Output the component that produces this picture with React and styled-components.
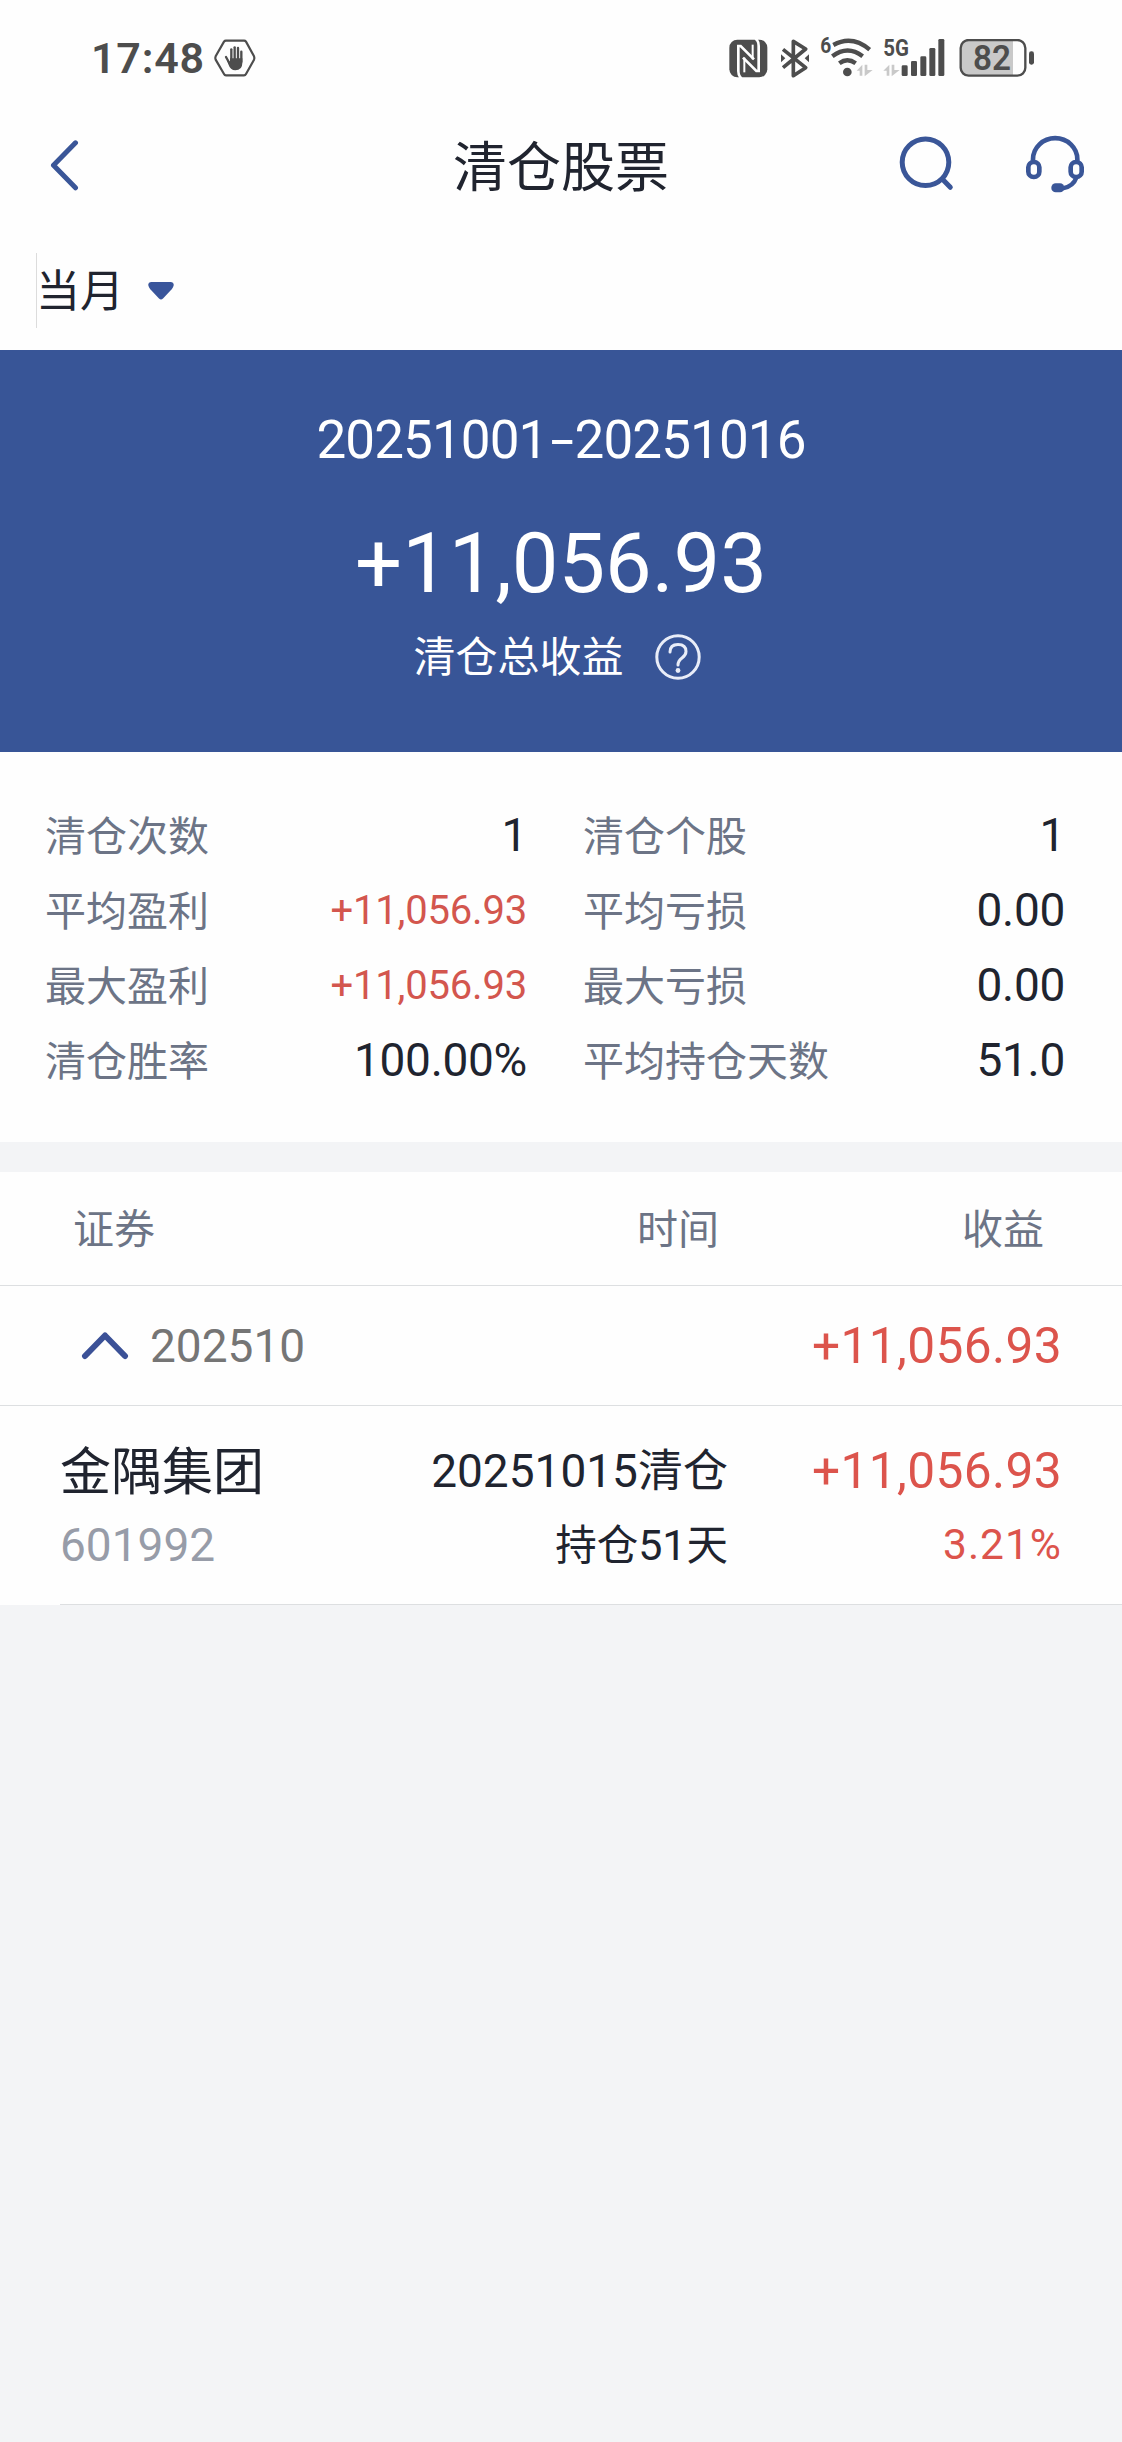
import React from "react";
import styled, { createGlobalStyle } from "styled-components";

const stats = [
  { label: "清仓次数", value: "1" },
  { label: "清仓个股", value: "1" },
  { label: "平均盈利", value: "+11,056.93", profit: true },
  { label: "平均亏损", value: "0.00" },
  { label: "最大盈利", value: "+11,056.93", profit: true },
  { label: "最大亏损", value: "0.00" },
  { label: "清仓胜率", value: "100.00%" },
  { label: "平均持仓天数", value: "51.0" },
];

const HandIcon = () => (
  <svg width="42" height="38" viewBox="431 58 126 114" fill="none">
    <path
      d="M467 63 H521 Q525 63 527 66 L551 110 Q553 115 551 120 L527 163 Q525 167 521 167 H467 Q463 167 461 163 L436 120 Q434 115 436 110 L461 66 Q463 63 467 63 Z"
      stroke="#4d4d4d"
      strokeWidth="6.5"
    />
    <g stroke="#4d4d4d" strokeWidth="7" strokeLinecap="round">
      <path d="M483 122 V89" />
      <path d="M493 122 V83" />
      <path d="M503 122 V85" />
      <path d="M513 126 V96" />
      <path d="M477 130 L467 112" />
    </g>
    <path
      d="M479 116 H516 V130 Q516 152 495 152 Q480 152 474 134 L470 122 L479 126 Z"
      fill="#4d4d4d"
    />
  </svg>
);

const NfcIcon = () => (
  <svg width="39" height="39" viewBox="57 56 117 117" fill="none">
    <rect x="58" y="58" width="114" height="113" rx="24" fill="#4d4d4d" />
    <path
      d="M95 174 Q85 168 85 152 V77 H92 L132 117"
      stroke="#fff"
      strokeWidth="8"
    />
    <path
      d="M136 55 Q146 61 146 77 V152 H139 L99 112"
      stroke="#fff"
      strokeWidth="8"
    />
    <path d="M103 112 V156" stroke="#fff" strokeWidth="6" />
    <path d="M128 117 V73" stroke="#fff" strokeWidth="6" />
  </svg>
);

const BluetoothIcon = () => (
  <svg width="30" height="39" viewBox="210 57 90 117" fill="none">
    <path
      d="M219 88 L287 143 L250 167 V64 L287 87 L219 143"
      stroke="#4d4d4d"
      strokeWidth="11"
      strokeLinejoin="round"
    />
    <path d="M213 103 L226 115 L213 127 Z" fill="#4d4d4d" />
    <path d="M297 103 L284 115 L297 127 Z" fill="#4d4d4d" />
  </svg>
);

const WifiIcon = () => (
  <svg width="53" height="48" viewBox="331 30 159 144" fill="none">
    <text
      x="332"
      y="99"
      fontFamily="Roboto, sans-serif"
      fontSize="64"
      fontWeight="700"
      fill="#4d4d4d"
      textLength="33"
      lengthAdjust="spacingAndGlyphs"
    >
      6
    </text>
    <g stroke="#4d4d4d" strokeWidth="13">
      <path d="M371 75 Q427 44 480 89" />
      <path d="M368 109 Q414 74 459 109" />
      <path d="M389 130 Q413 112 438 130" />
    </g>
    <circle cx="413" cy="156" r="13" fill="#4d4d4d" />
    <path d="M441 152 L458 134 V167 H450 V152 Z" fill="#c9c9c9" />
    <path d="M465 134 H473 V150 H489 L465 169 Z" fill="#c9c9c9" />
  </svg>
);

const SignalIcon = () => (
  <svg width="62" height="48" viewBox="518 30 186 144" fill="none">
    <text
      x="519"
      y="109"
      fontFamily="Roboto, sans-serif"
      fontSize="70"
      fontWeight="700"
      fill="#4d4d4d"
      textLength="77"
      lengthAdjust="spacingAndGlyphs"
    >
      5G
    </text>
    <path d="M519 152 L537 134 V167 H529 V152 Z" fill="#c9c9c9" />
    <path d="M544 134 H552 V150 H568 L544 169 Z" fill="#c9c9c9" />
    <g fill="#4d4d4d">
      <rect x="574" y="136" width="18" height="32" rx="4" />
      <rect x="602" y="123" width="18" height="45" rx="4" />
      <rect x="630" y="109" width="18" height="59" rx="4" />
      <rect x="657" y="84" width="18" height="84" rx="4" />
      <rect x="684" y="57" width="18" height="111" rx="4" />
    </g>
  </svg>
);

const BatteryIcon = () => (
  <svg width="76" height="39" viewBox="747 56 228 117" fill="none">
    <path d="M773 60 H909 V165 H773 Q753 165 753 143 V82 Q753 60 773 60 Z" fill="#c9c9c9" />
    <rect x="752" y="59" width="194" height="107" rx="24" stroke="#4d4d4d" strokeWidth="7" />
    <rect x="957" y="93" width="15" height="40" rx="7" fill="#4d4d4d" />
    <text
      x="846"
      y="149"
      textAnchor="middle"
      fontFamily="Roboto, sans-serif"
      fontSize="103"
      fontWeight="600"
      fill="#4d4d4d"
      textLength="114"
      lengthAdjust="spacingAndGlyphs"
    >
      82
    </text>
  </svg>
);

const BackIcon = () => (
  <svg width="30" height="54" viewBox="0 0.7 30 54" fill="none">
    <path
      d="M26.5 4.5 L4.5 27 L26.5 49.5"
      stroke="#3a5698"
      strokeWidth="5"
      strokeLinecap="round"
      strokeLinejoin="round"
    />
  </svg>
);

const SearchIcon = () => (
  <svg width="56" height="62" viewBox="0 -0.3 56 62" fill="none">
    <circle cx="27.5" cy="27" r="23.3" stroke="#3a5698" strokeWidth="5" />
    <path d="M44.5 44 L52.3 52" stroke="#3a5698" strokeWidth="5" strokeLinecap="round" />
  </svg>
);

const HeadsetIcon = () => (
  <svg width="60" height="62" viewBox="495 75 180 186" fill="none" stroke="#3a5698">
    <path d="M519 152 V148 A66 63 0 0 1 652 148 V152" strokeWidth="14" />
    <rect x="505" y="156" width="33" height="45" rx="16" strokeWidth="14" />
    <rect x="632" y="156" width="33" height="45" rx="16" strokeWidth="14" />
    <path d="M649 203 Q640 229 608 235" strokeWidth="13" />
    <rect x="574" y="220" width="39" height="27" rx="13" fill="#3a5698" stroke="none" />
  </svg>
);

const HelpIcon = () => (
  <svg width="46" height="46" viewBox="0 0 46 46" fill="none" stroke="#e9edf8">
    <circle cx="23" cy="23" r="21.2" strokeWidth="3" />
    <path
      d="M15 18 Q15 10.5 23 10.5 Q31 10.5 31 17.5 Q31 21 27 24 Q23 27 23 31"
      strokeWidth="3"
      strokeLinecap="round"
    />
    <circle cx="23" cy="36.5" r="2.4" fill="#e9edf8" stroke="none" />
  </svg>
);

const ChevronUpIcon = () => (
  <svg width="48" height="30" viewBox="0 0.5 48 30" fill="none">
    <path
      d="M4 25.5 L24 5 L44 25.5"
      stroke="#3b5197"
      strokeWidth="6"
      strokeLinecap="round"
      strokeLinejoin="round"
    />
  </svg>
);

const App = () => {
  return (
    <Page>
      <GlobalStyle />
      <StatusBar>
        <Clock>17:48</Clock>
        <HandIcon />
        <StatusIcons>
          <NfcIcon />
          <BluetoothIcon />
          <WifiIcon />
          <SignalIcon />
          <BatteryIcon />
        </StatusIcons>
      </StatusBar>

      <NavBar>
        <BackIcon />
        <h1>清仓股票</h1>
        <NavActions>
          <SearchIcon />
          <HeadsetIcon />
        </NavActions>
      </NavBar>

      <FilterBar>
        <MonthPicker>
          <span>当月</span>
          <svg width="26" height="18" viewBox="0 0 26 18">
            <path
              d="M3 0 H23 Q26.5 0.5 25.5 4 Q25 5.5 23.5 7.5 L15 16.5 Q13 18.5 11 16.5 L2.5 7.5 Q1 5.5 0.5 4 Q-0.5 0.5 3 0 Z"
              fill="#39559b"
            />
          </svg>
        </MonthPicker>
      </FilterBar>

      <Summary>
        <DateRange>
          20251001<i>-</i>20251016
        </DateRange>
        <Total>+11,056.93</Total>
        <TotalLabel>
          <span>清仓总收益</span>
          <HelpIcon />
        </TotalLabel>
      </Summary>

      <StatGrid>
        {stats.map((stat) => (
          <Stat key={stat.label}>
            <StatLabel>{stat.label}</StatLabel>
            <StatValue $profit={stat.profit}>{stat.value}</StatValue>
          </Stat>
        ))}
      </StatGrid>

      <TableHead>
        <span>证券</span>
        <span>时间</span>
        <span>收益</span>
      </TableHead>

      <MonthRow>
        <ChevronUpIcon />
        <span>202510</span>
        <Profit>+11,056.93</Profit>
      </MonthRow>

      <StockRow>
        <Cell>
          <StockName>金隅集团</StockName>
          <StockCode>601992</StockCode>
        </Cell>
        <Cell $right>
          <SoldDate>
            <b>20251015</b>清仓
          </SoldDate>
          <HoldDays>
            持仓<b>51</b>天
          </HoldDays>
        </Cell>
        <Cell $right>
          <Profit>+11,056.93</Profit>
          <Profit $small>3.21%</Profit>
        </Cell>
      </StockRow>
    </Page>
  );
};

const GlobalStyle = createGlobalStyle`
  * {
    box-sizing: border-box;
  }
  body {
    margin: 0;
    background: #f3f4f6;
  }
  svg {
    display: block;
    flex-shrink: 0;
  }
`;

const Page = styled.div`
  min-height: 2442px;
  background: #f3f4f6;
  color: #20242f;
  font-family: Roboto, "Noto Sans CJK SC", sans-serif;
  line-height: 1.2;
`;

const StatusBar = styled.div`
  display: flex;
  align-items: center;
  height: 116px;
  padding: 0 87px 0 91px;
  background: #fefefe;
`;

const Clock = styled.span`
  width: 123px;
  padding-top: 1px;
  color: #4d4d4d;
  font-size: 43px;
  font-weight: 600;
  letter-spacing: 0.8px;
`;

const StatusIcons = styled.div`
  display: flex;
  align-items: flex-end;
  gap: 10px;
  height: 39px;
  margin-left: auto;
  svg:first-child {
    margin-right: 2px;
  }
  svg:last-child {
    margin-left: 4px;
  }
`;

const NavBar = styled.div`
  display: grid;
  grid-template-columns: 1fr auto 1fr;
  align-items: center;
  height: 100px;
  padding: 0 37px 0 49px;
  background: #fefefe;
  h1 {
    margin: 0 12px 0 0;
    padding-top: 6px;
    font-size: 54px;
    font-weight: 400;
    line-height: 94px;
  }
`;

const NavActions = styled.div`
  display: flex;
  justify-content: flex-end;
  align-items: center;
  gap: 71px;
  margin-left: -12px;
`;

const FilterBar = styled.div`
  height: 134px;
  padding: 37px 36px 0;
  background: #fefefe;
`;

const MonthPicker = styled.div`
  display: flex;
  align-items: center;
  width: 160px;
  height: 75px;
  border-left: 1px solid #dcdcdc;
  font-size: 44px;
  span {
    width: 88px;
    margin-right: 23px;
    padding-top: 4px;
    text-indent: -1px;
  }
`;

const Summary = styled.div`
  display: flex;
  flex-direction: column;
  align-items: center;
  height: 402px;
  padding-top: 55px;
  background: #385597;
  color: #fff;
`;

const DateRange = styled.div`
  font-size: 53px;
  line-height: 70px;
  letter-spacing: -0.9px;
  i {
    display: inline-block;
    width: 27px;
    font-style: normal;
    text-align: center;
    transform: scaleX(1.6);
  }
`;

const Total = styled.div`
  margin-top: 39px;
  font-size: 83px;
  line-height: 100px;
`;

const TotalLabel = styled.div`
  display: flex;
  align-items: center;
  gap: 31px;
  height: 50px;
  margin-top: 18px;
  padding-right: 8px;
  font-size: 42px;
  span {
    padding-top: 3px;
  }
`;

const StatGrid = styled.div`
  display: grid;
  grid-template-columns: 482px 482px;
  grid-auto-rows: 75px;
  column-gap: 56px;
  height: 390px;
  padding: 46px 45px 0;
  background: #fefefe;
`;

const Stat = styled.div`
  display: flex;
  align-items: center;
  justify-content: space-between;
`;

const StatLabel = styled.span`
  padding-top: 4px;
  color: #6c7486;
  font-size: 41px;
`;

const StatValue = styled.span`
  padding-top: 1px;
  color: ${(props) => (props.$profit ? "#d3564e" : "#20242f")};
  font-size: ${(props) => (props.$profit ? "40px" : "46px")};
  letter-spacing: ${(props) => (props.$profit ? "-0.2px" : "-0.3px")};
`;

const TableHead = styled.div`
  display: grid;
  grid-template-columns: 1fr 1fr 325px;
  align-items: center;
  height: 114px;
  margin-top: 30px;
  padding: 5px 78px 0 73px;
  border-bottom: 1px solid #dddfe1;
  background: #fefefe;
  color: #6c7486;
  font-size: 41px;
  span:not(:first-child) {
    text-align: right;
  }
`;

const MonthRow = styled.div`
  display: flex;
  align-items: center;
  height: 120px;
  padding: 1px 60px 0 81px;
  border-bottom: 1px solid #dddfe1;
  background: #fefefe;
  span {
    margin-left: 21px;
    padding-top: 1px;
    color: #757575;
    font-size: 46px;
  }
  div {
    margin-left: auto;
    padding-top: 2px;
  }
`;

const Profit = styled.div`
  color: #dc544c;
  font-size: ${(props) => (props.$small ? "42.5px" : "49.6px")};
  letter-spacing: ${(props) => (props.$small ? "1px" : "0.4px")};
`;

const StockRow = styled.div`
  display: grid;
  grid-template-columns: 300px 1fr 333px;
  height: 199px;
  padding: 28px 60px 0 60px;
  background: linear-gradient(#dddfe1, #dddfe1) 60px 100% / 100% 1px no-repeat #fefefe;
`;

const Cell = styled.div`
  line-height: 74px;
  text-align: ${(props) => (props.$right ? "right" : "left")};
  b {
    font-weight: 400;
  }
`;

const StockName = styled.div`
  height: 74px;
  padding-top: 2px;
  font-size: 51px;
`;

const StockCode = styled.div`
  color: #979ca8;
  font-size: 46px;
`;

const SoldDate = styled.div`
  padding-right: 1px;
  font-size: 45px;
  b {
    font-size: 46px;
  }
`;

const HoldDays = styled.div`
  height: 74px;
  padding-right: 1px;
  font-size: 41.5px;
  line-height: 72px;
  b {
    font-size: 43px;
  }
`;

export default App;
